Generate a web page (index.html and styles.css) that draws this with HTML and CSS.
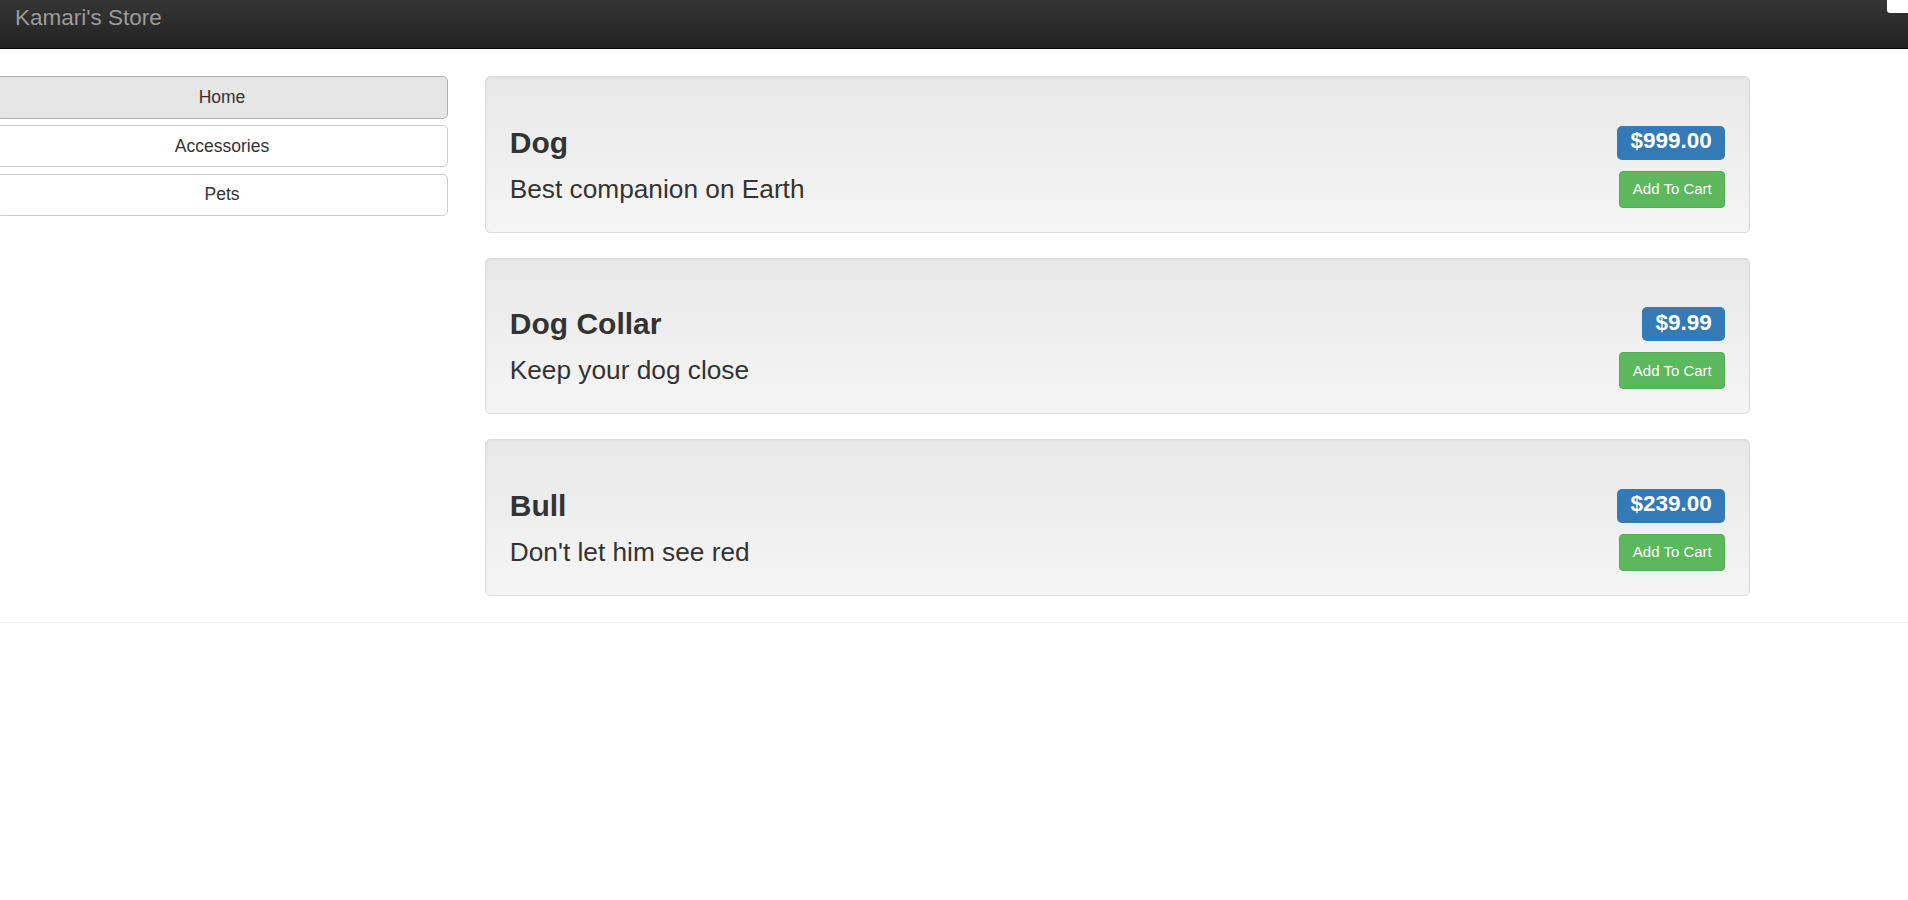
FILE: index.html
```html
<!DOCTYPE html>
<html>
<head>
<meta charset="utf-8">
<title>Kamari's Store</title>
<link rel="stylesheet" href="styles.css">
</head>
<body>
<header class="navbar">
  <a class="brand" href="#">Kamari's Store</a>
  <span class="corner"></span>
</header>
<main class="page">
  <nav class="sidebar">
    <a class="side-btn active" href="#">Home</a>
    <a class="side-btn" href="#">Accessories</a>
    <a class="side-btn" href="#">Pets</a>
  </nav>
  <section class="products">
    <div class="well">
      <div class="row-head">
        <h3 class="title">Dog</h3>
        <span class="price">$999.00</span>
      </div>
      <div class="row-body">
        <p class="lead">Best companion on Earth</p>
        <button class="cart-btn">Add To Cart</button>
      </div>
    </div>
    <div class="well">
      <div class="row-head">
        <h3 class="title">Dog Collar</h3>
        <span class="price">$9.99</span>
      </div>
      <div class="row-body">
        <p class="lead">Keep your dog close</p>
        <button class="cart-btn">Add To Cart</button>
      </div>
    </div>
    <div class="well">
      <div class="row-head">
        <h3 class="title">Bull</h3>
        <span class="price">$239.00</span>
      </div>
      <div class="row-body">
        <p class="lead">Don't let him see red</p>
        <button class="cart-btn">Add To Cart</button>
      </div>
    </div>
  </section>
</main>
<footer class="footer"></footer>
</body>
</html>
```
FILE: styles.css
```css
* { box-sizing: border-box; }
html, body {
  margin: 0;
  padding: 0;
  background: #fff;
  font-family: "Liberation Sans", Arial, Helvetica, sans-serif;
  color: #333;
}
.navbar {
  position: relative;
  height: 49px;
  background: linear-gradient(to bottom, #363636 0%, #222 100%);
  border-bottom: 1px solid #080808;
  padding-left: 15px;
}
.brand {
  display: block;
  padding-top: 5px;
  font-size: 22.5px;
  line-height: 25px;
  color: #9d9d9d;
  text-decoration: none;
  text-shadow: 0 -1px 0 rgba(0,0,0,.25);
}
.corner {
  position: absolute;
  top: 0;
  right: 0;
  width: 21px;
  height: 13px;
  background: #fff;
  border-bottom-left-radius: 3px;
}
.page {
  display: flex;
  align-items: flex-start;
  gap: 37px;
  padding-top: 27px;
  margin-left: -4px;
}
.sidebar {
  width: 452px;
  flex: none;
  display: flex;
  flex-direction: column;
  gap: 6.25px;
}
.side-btn {
  display: block;
  height: 42.5px;
  padding: 7.75px 15px;
  font-size: 17.5px;
  line-height: 25px;
  text-align: center;
  color: #333;
  text-decoration: none;
  background: #fff;
  border: 1px solid #ccc;
  border-radius: 5px;
}
.side-btn.active {
  background: #e6e6e6;
  border-color: #adadad;
}
.products {
  width: 1265px;
  flex: none;
  display: flex;
  flex-direction: column;
  gap: 25px;
}
.well {
  padding: 23.75px;
  background: linear-gradient(to bottom, #e8e8e8 0%, #f5f5f5 100%);
  border: 1px solid #dcdcdc;
  border-radius: 5px;
  box-shadow: inset 0 1px 3px rgba(0,0,0,.05), 0 1px 0 rgba(255,255,255,.1);
}
.row-head {
  display: flex;
  justify-content: space-between;
  align-items: flex-start;
  margin-top: 25px;
  margin-bottom: 11.25px;
}
.title {
  margin: 0;
  font-size: 30px;
  line-height: 33px;
  font-weight: bold;
  color: #333;
}
.price {
  display: block;
  padding: 4.5px 13.5px 6.75px;
  font-size: 22.5px;
  line-height: 1;
  font-weight: bold;
  color: #fff;
  background: #337ab7;
  border-radius: 5px;
}
.row-body {
  display: flex;
  justify-content: space-between;
  align-items: flex-start;
}
.lead {
  margin: 0;
  font-size: 26.25px;
  line-height: 36.75px;
  font-weight: normal;
  color: #333;
}
.cart-btn {
  padding: 6.25px 12.5px;
  font-family: inherit;
  font-size: 15px;
  line-height: 22.5px;
  color: #fff;
  background: #5cb85c;
  border: 1px solid #4cae4c;
  border-radius: 4px;
  cursor: pointer;
}
.footer {
  margin-top: 26.5px;
  border-top: 1px solid #eee;
  height: 1px;
}
```
